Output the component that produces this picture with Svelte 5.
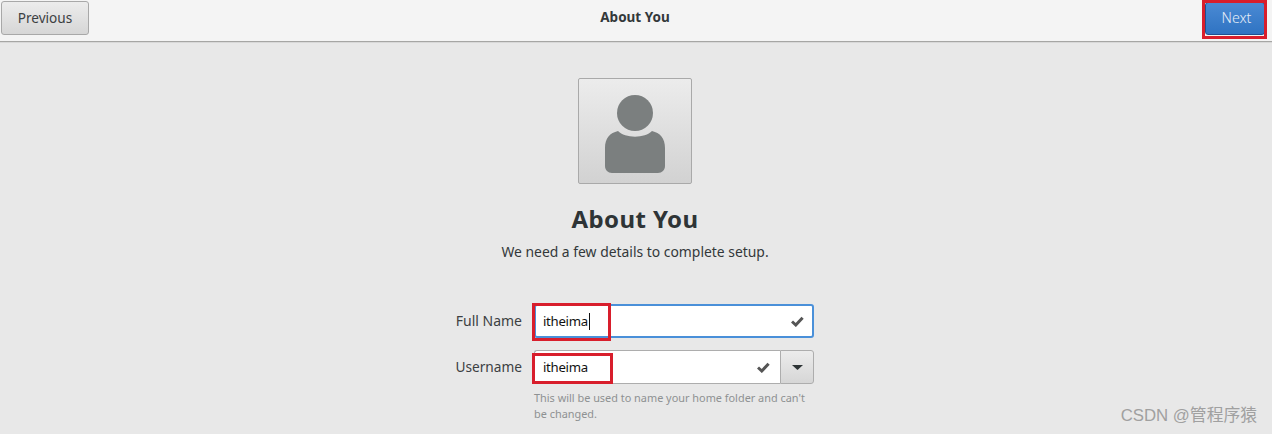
<script lang="ts">
  let fullName = "itheima";
  let username = "itheima";
</script>

<div class="window">
  <header class="topbar">
    <button class="btn prev" type="button">Previous</button>
    <h1>About You</h1>
    <div class="next-wrap">
      <button class="btn next" type="button">Next</button>
      <span class="mark next-mark"></span>
    </div>
  </header>

  <main class="page">
    <div class="avatar">
      <svg width="62" height="78" viewBox="0 0 62 78" aria-hidden="true">
        <circle cx="31" cy="18" r="18" fill="#7b7f7f" />
        <path
          d="M14 36 C21 43.5 41 43.5 48 36 C56 38 61 43 61 53 L61 71 C61 75 58 78 54 78 L8 78 C4 78 1 75 1 71 L1 53 C1 43 6 38 14 36 Z"
          fill="#7b7f7f"
        />
      </svg>
    </div>
    <h2>About You</h2>
    <p class="lead">We need a few details to complete setup.</p>

    <form class="form">
      <label for="full-name">Full Name</label>
      <div class="field focused">
        <span class="value" id="full-name">{fullName}<i class="caret"></i></span>
        <svg class="check" width="13" height="11" viewBox="0 0 13 11" aria-hidden="true">
          <path d="M1 5.5 L4.8 9 L11.6 1.8" fill="none" stroke="#555" stroke-width="3" />
        </svg>
        <span class="mark name-mark"></span>
      </div>

      <label for="username">Username</label>
      <div class="combo">
        <div class="field">
          <span class="value" id="username">{username}</span>
          <svg class="check" width="13" height="11" viewBox="0 0 13 11" aria-hidden="true">
            <path d="M1 5.5 L4.8 9 L11.6 1.8" fill="none" stroke="#555" stroke-width="3" />
          </svg>
          <span class="mark user-mark"></span>
        </div>
        <button class="arrow" type="button" aria-label="Choose username">
          <svg width="11" height="5" viewBox="0 0 11 5" aria-hidden="true"><path d="M0 0 H11 L5.5 5 Z" fill="#2e3436" /></svg>
        </button>
      </div>

      <p class="hint">This will be used to name your home folder and can't be changed.</p>
    </form>
  </main>

  <span class="watermark">CSDN @管程序猿</span>
</div>

<style>
  :global(body) {
    margin: 0;
  }

  .window {
    position: relative;
    width: 1272px;
    height: 434px;
    overflow: hidden;
    background: #e8e8e8;
    color: #2e3436;
    font-family: "Noto Sans", sans-serif;
  }

  .topbar {
    position: relative;
    display: flex;
    align-items: flex-start;
    justify-content: space-between;
    box-sizing: border-box;
    height: 42px;
    padding: 1px 7px 0 1px;
    border-bottom: 1px solid #a6a6a4;
    background: #f4f4f4;
    box-shadow: 0 1px 0 #d8d8d8;
  }

  .topbar h1 {
    position: absolute;
    left: 0;
    right: 2px;
    top: 8px;
    margin: 0;
    font-size: 13.5px;
    font-weight: 700;
    line-height: 18px;
    text-align: center;
    color: #33383a;
  }

  .btn {
    height: 34px;
    padding: 0;
    border-radius: 3px;
    font-family: inherit;
    font-size: 13.6px;
  }

  .prev {
    width: 88px;
    padding-bottom: 2px;
    border: 1px solid #a8a8a8;
    background: linear-gradient(#ececec, #d6d6d6);
    color: #3c4042;
  }

  .next-wrap {
    position: relative;
    margin-top: 1px;
  }

  .next {
    display: block;
    width: 60px;
    height: 33px;
    padding-left: 3px;
    padding-bottom: 2px;
    border: 1px solid #1f4f8f;
    background: linear-gradient(#4a8ad4, #2f73c2);
    color: #e6eef8;
    font-size: 14.2px;
    font-weight: 300;
  }

  .mark {
    position: absolute;
    border: 3px solid #d81e2c;
    pointer-events: none;
  }

  .next-mark {
    left: -3px;
    top: -2px;
    width: 59px;
    height: 33px;
    box-sizing: content-box;
  }

  .page {
    display: flex;
    flex-direction: column;
    align-items: center;
    padding-top: 36px;
    padding-right: 2px;
  }

  .avatar {
    display: flex;
    align-items: flex-end;
    justify-content: center;
    box-sizing: border-box;
    width: 114px;
    height: 106px;
    padding-bottom: 10px;
    border: 1px solid #a9a9a9;
    border-radius: 2px;
    background: linear-gradient(#ececec, #d2d2d2);
  }

  h2 {
    margin: 19px 0 0;
    font-size: 24px;
    font-weight: 700;
    line-height: 32px;
    letter-spacing: 0.4px;
    color: #2e3436;
  }

  .lead {
    margin: 7px 0 0;
    font-size: 13.9px;
    line-height: 20px;
    color: #33383a;
  }

  .form {
    display: grid;
    grid-template-columns: 88px 280px;
    column-gap: 12px;
    align-items: center;
    margin: 42px 0 0 -22px;
  }

  label {
    padding-bottom: 2px;
    font-size: 13.7px;
    text-align: right;
    color: #3c4042;
  }

  .field {
    position: relative;
    display: flex;
    flex: 1;
    align-items: center;
    justify-content: space-between;
    box-sizing: border-box;
    height: 34px;
    padding: 0 9px 0 8px;
    border: 1px solid #adadad;
    border-radius: 3px;
    background: #fff;
  }

  .field.focused {
    border: 2px solid #4a90d9;
    padding: 0 8px 0 7px;
    margin-bottom: 12px;
  }

  label[for="full-name"] {
    margin-bottom: 12px;
    font-size: 14px;
  }

  .value {
    display: flex;
    align-items: center;
    font-size: 13.2px;
    letter-spacing: -0.3px;
    color: #111;
  }

  .caret {
    width: 1px;
    height: 17px;
    margin-left: 1px;
    background: #111;
  }

  .name-mark {
    left: -4px;
    top: -3px;
    width: 73px;
    height: 32px;
  }

  .user-mark {
    left: -3px;
    top: 2px;
    width: 75px;
    height: 25px;
  }

  .combo {
    display: flex;
  }

  .combo .field {
    border-right: 0;
    border-radius: 3px 0 0 3px;
    padding-right: 10px;
  }

  .arrow {
    display: flex;
    align-items: center;
    justify-content: center;
    width: 34px;
    height: 34px;
    padding: 0;
    border: 1px solid #adadad;
    border-radius: 0 3px 3px 0;
    background: linear-gradient(#ececec, #d6d6d6);
  }

  .hint {
    grid-column: 2;
    margin: 6px 0 0;
    width: 280px;
    font-size: 10.9px;
    line-height: 16px;
    color: #8e9192;
  }

  .watermark {
    position: absolute;
    right: 15px;
    top: 406px;
    font-family: "Liberation Sans", "Noto Sans CJK SC", sans-serif;
    font-size: 16.8px;
    line-height: 20px;
    color: #a0a0a0;
  }
</style>
